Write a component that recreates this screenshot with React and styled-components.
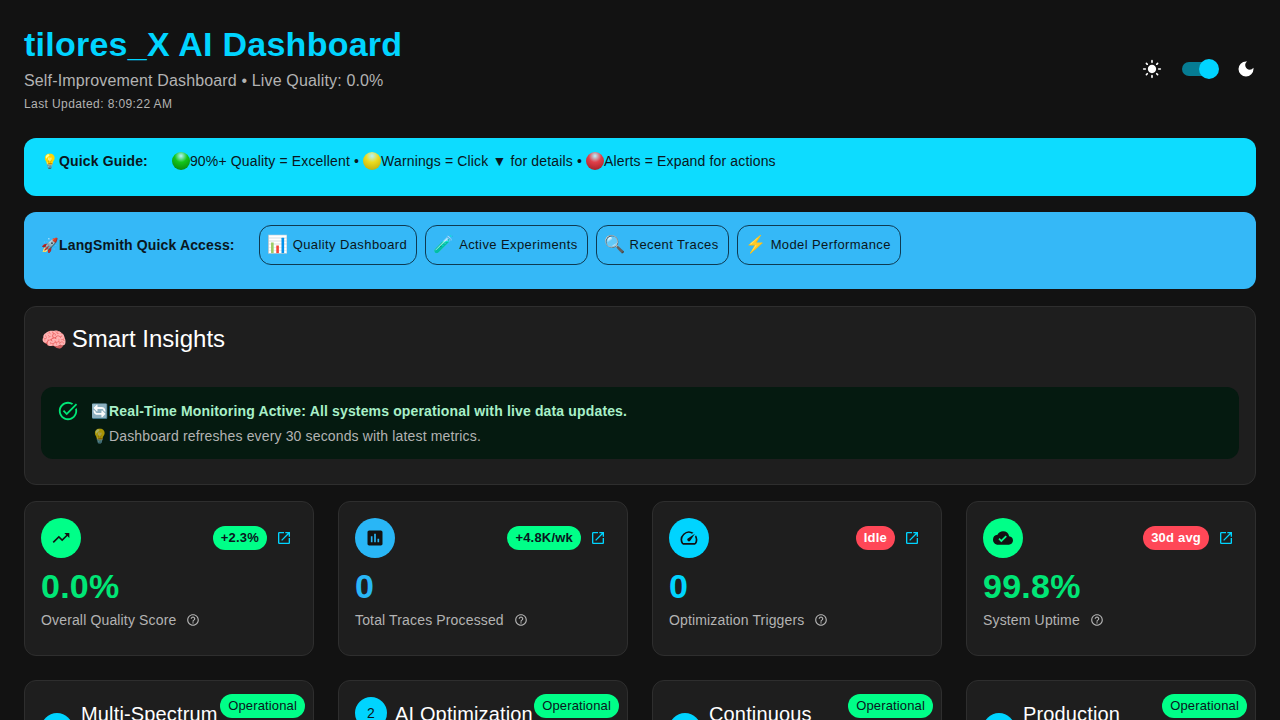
import React from "react";
import styled, { createGlobalStyle } from "styled-components";
import {
  MdTrendingUp,
  MdAssessment,
  MdSpeed,
  MdCloudDone,
  MdOpenInNew,
  MdHelpOutline,
  MdTaskAlt,
  MdLightMode,
  MdDarkMode,
} from "react-icons/md";

const GlobalStyle = createGlobalStyle`
  html, body {
    margin: 0;
    background: #121212;
    overflow: hidden;
    height: 720px;
  }
  * { box-sizing: border-box; }
  body {
    font-family: "Liberation Sans", Arial, sans-serif;
    color: #fff;
  }
`;

const metrics = [
  { icon: MdTrendingUp, tone: "#00ff88", valueTone: "#00e676", chip: "+2.3%", chipTone: "#00ff88", value: "0.0%", label: "Overall Quality Score" },
  { icon: MdAssessment, tone: "#29b6f6", valueTone: "#29b6f6", chip: "+4.8K/wk", chipTone: "#00ff88", value: "0", label: "Total Traces Processed" },
  { icon: MdSpeed, tone: "#00d4ff", valueTone: "#00d4ff", chip: "Idle", chipTone: "#ff4757", light: true, value: "0", label: "Optimization Triggers" },
  { icon: MdCloudDone, tone: "#00ff88", valueTone: "#00e676", chip: "30d avg", chipTone: "#ff4757", light: true, value: "99.8%", label: "System Uptime" },
];

const systems = [
  { title: "Multi-Spectrum Analysis", step: "1" },
  { title: "AI Optimization", step: "2" },
  { title: "Continuous Learning", step: "3" },
  { title: "Production Integration", step: "4" },
];

const links = [
  { emoji: "📊", label: "Quality Dashboard" },
  { emoji: "🧪", label: "Active Experiments" },
  { emoji: "🔍", label: "Recent Traces" },
  { emoji: "⚡", label: "Model Performance" },
];

const App = () => {
  return (
    <Page>
      <GlobalStyle />
      <Header>
        <div>
          <Title>tilores_X AI Dashboard</Title>
          <Subtitle>Self-Improvement Dashboard • Live Quality: 0.0%</Subtitle>
          <Updated>Last Updated: 8:09:22 AM</Updated>
        </div>
        <ThemeSwitch>
          <MdLightMode size={20} />
          <Track>
            <Thumb />
          </Track>
          <MdDarkMode size={20} />
        </ThemeSwitch>
      </Header>

      <GuideBar>
        <BarLabel><Emoji>💡</Emoji>Quick Guide:</BarLabel>
        <GuideText>
          <Ball $tone="#12c61a" $dark="#067a0c" />90%+ Quality = Excellent •{" "}
          <Ball $tone="#ecdc1e" $dark="#b5a50c" />Warnings = Click ▼ for details •{" "}
          <Ball $tone="#e0404a" $dark="#96181f" />Alerts = Expand for actions
        </GuideText>
      </GuideBar>

      <AccessBar>
        <BarLabel>
          <Emoji>🚀</Emoji>LangSmith Quick Access:
        </BarLabel>
        <AccessLinks>
          {links.map((link) => (
            <AccessButton key={link.label}>
              <ButtonEmoji>{link.emoji}</ButtonEmoji>
              {link.label}
            </AccessButton>
          ))}
        </AccessLinks>
      </AccessBar>

      <InsightsCard>
        <InsightsTitle><BrainEmoji>🧠</BrainEmoji> Smart Insights</InsightsTitle>
        <Alert>
          <MdTaskAlt size={22} color="#00e676" />
          <div>
            <AlertTitle><Emoji>🔄</Emoji>Real-Time Monitoring Active: All systems operational with live data updates.</AlertTitle>
            <AlertBody><DimEmoji>💡</DimEmoji>Dashboard refreshes every 30 seconds with latest metrics.</AlertBody>
          </div>
        </Alert>
      </InsightsCard>

      <MetricGrid>
        {metrics.map((metric) => (
          <MetricCard key={metric.label}>
            <MetricTop>
              <MetricIcon $tone={metric.tone}>
                <metric.icon size={20} />
              </MetricIcon>
              <MetricActions>
                <Chip $tone={metric.chipTone} $light={metric.light}>{metric.chip}</Chip>
                <MdOpenInNew size={16} color="#00d4ff" />
              </MetricActions>
            </MetricTop>
            <MetricValue $tone={metric.valueTone}>{metric.value}</MetricValue>
            <MetricLabel>
              {metric.label}
              <MdHelpOutline size={14} />
            </MetricLabel>
          </MetricCard>
        ))}
      </MetricGrid>

      <SystemGrid>
        {systems.map((system) => (
          <SystemCard key={system.title}>
            <StatusChip>Operational</StatusChip>
            <SystemHead>
              <Step>{system.step}</Step>
              <SystemTitle>{system.title}</SystemTitle>
            </SystemHead>
          </SystemCard>
        ))}
      </SystemGrid>
    </Page>
  );
};

const Page = styled.div`
  padding: 24px;
  height: 720px;
  overflow: hidden;
`;

const Header = styled.header`
  display: flex;
  justify-content: space-between;
  align-items: flex-start;
  height: 90px;
  margin-bottom: 24px;
`;

const Title = styled.h1`
  margin: 0 0 5px;
  font-size: 34px;
  line-height: 40px;
  font-weight: 700;
  letter-spacing: 0.25px;
  color: #00d4ff;
`;

const Subtitle = styled.div`
  font-size: 16px;
  line-height: 24px;
  letter-spacing: 0.15px;
  color: #b3b3b3;
`;

const Updated = styled.div`
  margin-top: 2px;
  font-size: 12px;
  line-height: 18px;
  letter-spacing: 0.4px;
  color: #b3b3b3;
`;

const ThemeSwitch = styled.div`
  align-self: center;
  display: flex;
  align-items: center;
  gap: 20px;
  color: #fff;
`;

const Track = styled.div`
  position: relative;
  width: 34px;
  height: 14px;
  border-radius: 7px;
  background: #067c93;
`;

const Thumb = styled.div`
  position: absolute;
  right: -3px;
  top: -3px;
  width: 20px;
  height: 20px;
  border-radius: 50%;
  background: #00d4ff;
`;

const GuideBar = styled.section`
  display: flex;
  align-items: flex-start;
  height: 58px;
  margin-bottom: 16px;
  padding: 13px 16px;
  border-radius: 12px;
  background: #0ddcff;
  color: #0a1620;
  font-size: 14px;
  line-height: 20px;
`;

const AccessBar = styled.section`
  display: flex;
  align-items: center;
  height: 77px;
  margin-bottom: 17px;
  padding: 13px 16px 24px;
  border-radius: 12px;
  background: #35b8f7;
  color: #0a1620;
`;

const AccessLinks = styled.div`
  display: flex;
  gap: 8px;
`;

const BarLabel = styled.span`
  margin-right: 24px;
  font-size: 14px;
  line-height: 20px;
  font-weight: 700;
  letter-spacing: 0.15px;
`;

const Emoji = styled.span`
  display: inline-block;
  width: 19px;
  text-align: center;
  font-weight: 400;
  letter-spacing: 0;
`;

const DimEmoji = styled(Emoji)`
  opacity: 0.65;
`;

const BrainEmoji = styled.span`
  display: inline-block;
  width: 24px;
  font-size: 21px;
  letter-spacing: 0;
`;

const Ball = styled.span`
  display: inline-block;
  width: 18px;
  height: 18px;
  vertical-align: -4px;
  border-radius: 50%;
  background: radial-gradient(circle at 50% 22%, #ffffffb0 0, ${(p) => p.$tone} 38%, ${(p) => p.$dark} 100%);
`;

const GuideText = styled.span`
  letter-spacing: 0.15px;
`;

const AccessButton = styled.button`
  display: inline-flex;
  align-items: center;
  height: 40px;
  padding: 0 9px 2px 7px;
  gap: 6px;
  border: 1px solid #0e3a52;
  border-radius: 12px;
  background: transparent;
  color: #0a1620;
  font-family: inherit;
  font-size: 13px;
  letter-spacing: 0.4px;
`;

const ButtonEmoji = styled.span`
  width: 20px;
  font-size: 17px;
  text-align: center;
  letter-spacing: 0;
`;

const Card = styled.div`
  border: 1px solid #2e2e2e;
  border-radius: 12px;
  background: #1e1e1e;
`;

const InsightsCard = styled(Card)`
  height: 178.5px;
  margin-bottom: 16px;
  padding: 16px;
`;

const InsightsTitle = styled.h2`
  height: 32px;
  margin: 0 0 32px;
  font-size: 24px;
  line-height: 32px;
  font-weight: 400;
  color: #fff;
`;

const Alert = styled.div`
  display: flex;
  gap: 11px;
  height: 72px;
  padding: 13px 16px;
  border-radius: 12px;
  background: #051a10;
`;

const AlertTitle = styled.div`
  font-size: 14px;
  line-height: 22px;
  font-weight: 700;
  letter-spacing: 0.15px;
  color: #a8f0c8;
`;

const AlertBody = styled.div`
  margin-top: 3px;
  font-size: 14px;
  line-height: 22px;
  letter-spacing: 0.15px;
  color: #b3b3b3;
`;

const MetricGrid = styled.div`
  display: grid;
  grid-template-columns: repeat(4, 1fr);
  gap: 24px;
  margin-bottom: 24px;
`;

const MetricCard = styled(Card)`
  height: 155.5px;
  padding: 16px;
`;

const MetricTop = styled.div`
  display: flex;
  justify-content: space-between;
  align-items: center;
  height: 40px;
  margin-bottom: 8px;
`;

const MetricIcon = styled.div`
  display: flex;
  align-items: center;
  justify-content: center;
  width: 40px;
  height: 40px;
  border-radius: 50%;
  background: ${(p) => p.$tone};
  color: #121212;
`;

const MetricActions = styled.div`
  display: flex;
  align-items: center;
  gap: 9px;
  padding-right: 5px;
`;

const Chip = styled.span`
  display: inline-flex;
  align-items: center;
  height: 24px;
  padding: 0 8px;
  border-radius: 12px;
  background: ${(p) => p.$tone};
  color: ${(p) => (p.$light ? "#fff" : "#0a1620")};
  font-size: 13px;
  font-weight: 700;
  letter-spacing: 0.2px;
`;

const MetricValue = styled.div`
  font-size: 34px;
  line-height: 40px;
  font-weight: 700;
  letter-spacing: 0.25px;
  color: ${(p) => p.$tone};
`;

const MetricLabel = styled.div`
  display: flex;
  align-items: center;
  gap: 10px;
  margin-top: 3px;
  font-size: 14px;
  line-height: 22px;
  letter-spacing: 0.15px;
  color: #b3b3b3;
`;

const SystemGrid = styled.div`
  display: grid;
  grid-template-columns: repeat(4, 1fr);
  gap: 24px;
`;

const SystemCard = styled(Card)`
  position: relative;
  height: 200px;
  padding: 16px;
`;

const StatusChip = styled.span`
  position: absolute;
  top: 12.5px;
  right: 8px;
  display: inline-flex;
  align-items: center;
  height: 24px;
  padding: 0 8px;
  border-radius: 12px;
  background: #00ff88;
  color: #0a1620;
  font-size: 13px;
  letter-spacing: 0.15px;
`;

const SystemHead = styled.div`
  display: flex;
  align-items: center;
  gap: 8px;
`;

const Step = styled.div`
  flex: none;
  display: flex;
  align-items: center;
  justify-content: center;
  width: 32px;
  height: 32px;
  border-radius: 50%;
  background: #00d4ff;
  color: #0a1620;
  font-size: 14px;
`;

const SystemTitle = styled.h3`
  margin: 0 0 -1px;
  padding-top: 1px;
  max-width: 148px;
  font-size: 20px;
  line-height: 32px;
  font-weight: 400;
  letter-spacing: 0.15px;
  color: #fff;
`;

export default App;
